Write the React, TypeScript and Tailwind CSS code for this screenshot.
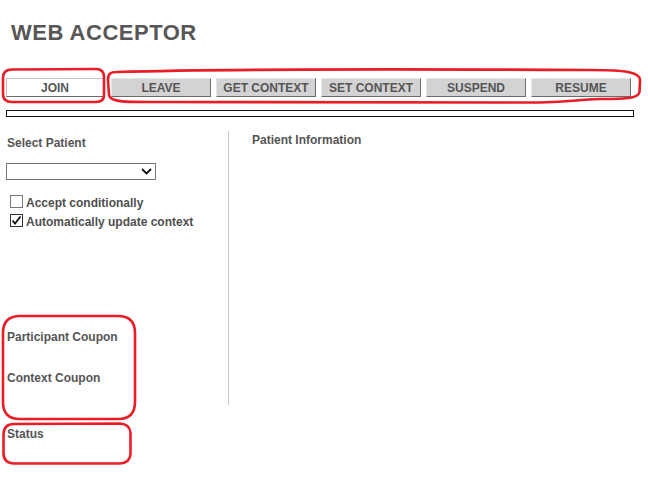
import React from 'react';

const buttons = ['LEAVE', 'GET CONTEXT', 'SET CONTEXT', 'SUSPEND', 'RESUME'];

function Checkbox({ checked, label }: { checked?: boolean; label: string }) {
    return (
        <div className="flex items-start">
            <svg width="13" height="13" viewBox="0 0 13 13" className="ml-[4px] shrink-0">
                <rect x="0.5" y="0.5" width="12" height="12" fill="white" stroke={checked ? '#333' : '#767676'} />
                {checked && <path d="M2.5 6.5 L5 9.5 L10.5 2.5" fill="none" stroke="#111" strokeWidth="1.8" />}
            </svg>
            <span className="ml-[3px] mt-[1px] text-[12px] leading-[14px] font-bold text-[#4f4f4f] whitespace-nowrap">{label}</span>
        </div>
    );
}

function Annotations() {
    // hand drawn red marks over the screenshot
    return (
        <svg className="absolute inset-0 pointer-events-none" width="648" height="488" viewBox="0 0 648 488">
            <g fill="none" stroke="#ea1c26" strokeWidth="2.6" strokeLinejoin="round">
                <path d="M12 69.5 L96 69 Q104 69 104 77 L104 95 Q104 102 96 102 L12 102 Q3 102 3 94 L3 78 Q3 69.5 12 69.5 Z" />
                <path d="M117 72 C200 69.5 400 69 590 70 C625 70 640 72 640 80 L639.5 92 C638 98 630 99 600 99 C575 99.5 575 102 540 102.5 L150 102 C125 102 110 102 109 95 L108 80 C108 74 110 72 117 72 Z" />
                <path d="M20 316 L118 316 Q135 316 135 333 L135 402 Q135 419 118 419 L20 419 Q3 419 3 402 L3 333 Q3 316 20 316 Z" />
                <path d="M14 424 L120 423.5 Q130 424 130.5 433 L130.5 454 Q130 463 120 463.5 L14 463.5 Q3.5 463 3.5 453 L3.5 434 Q4 424 14 424 Z" />
            </g>
        </svg>
    );
}

export default function App() {
    return (
        <div className="relative w-[648px] h-[488px] bg-white overflow-hidden font-['Liberation_Sans',Arial,sans-serif] text-[#555]">
            <h1 className="pl-[11px] pt-5 text-[22px] leading-[25px] font-bold tracking-[0.5px] text-[#575757]">WEB ACCEPTOR</h1>

            <div className="mt-[33px] flex pl-[6px]">
                <button className="w-[98px] h-[19px] bg-white border border-t-[#c4c4c4] border-l-[#c4c4c4] border-b-[#6b6b6b] border-r-[#6b6b6b] text-[12px] font-bold leading-none text-[#555]">
                    JOIN
                </button>
                <div className="ml-[7px] flex gap-[5px]">
                    {buttons.map((b) => (
                        <button
                            key={b}
                            className="w-[100px] h-[19px] bg-[#d3d3d3] border border-t-[#e6e6e6] border-l-[#e6e6e6] border-b-[#6b6b6b] border-r-[#6b6b6b] text-[12px] font-bold leading-none text-[#555] whitespace-nowrap"
                        >
                            {b}
                        </button>
                    ))}
                </div>
            </div>

            <div className="mt-[13px] ml-[6px] w-[628px] h-[7px] border border-[#111] bg-white" />

            <div className="mt-[14px] flex h-[274px]">
                <div className="w-[229px] border-r border-[#c8c8c8] pl-[6px] pt-[5px]">
                    <div className="pl-[1px] text-[12px] leading-[14px] font-bold">Select Patient</div>
                    <div className="mt-[13px] w-[150px] h-[17px] border border-[#767676] bg-white flex items-center justify-end pr-[3px]">
                        <svg width="11" height="7" viewBox="0 0 11 7">
                            <path d="M1 1 L5.5 5.5 L10 1" fill="none" stroke="#111" strokeWidth="1.8" />
                        </svg>
                    </div>
                    <div className="mt-[15px]">
                        <Checkbox label="Accept conditionally" />
                        <div className="mt-[4px]">
                            <Checkbox checked label="Automatically update context" />
                        </div>
                    </div>
                    <div className="mt-[101px] pl-[1px] text-[12px] leading-[14px] font-bold">Participant Coupon</div>
                    <div className="mt-[27px] pl-[1px] text-[12px] leading-[14px] font-bold">Context Coupon</div>
                </div>
                <div className="pl-[23px] pt-[2px]">
                    <div className="text-[12px] leading-[14px] font-bold">Patient Information</div>
                </div>
            </div>

            <div className="mt-[22px] pl-[7px] text-[12px] leading-[14px] font-bold">Status</div>

            <Annotations />
        </div>
    );
}
